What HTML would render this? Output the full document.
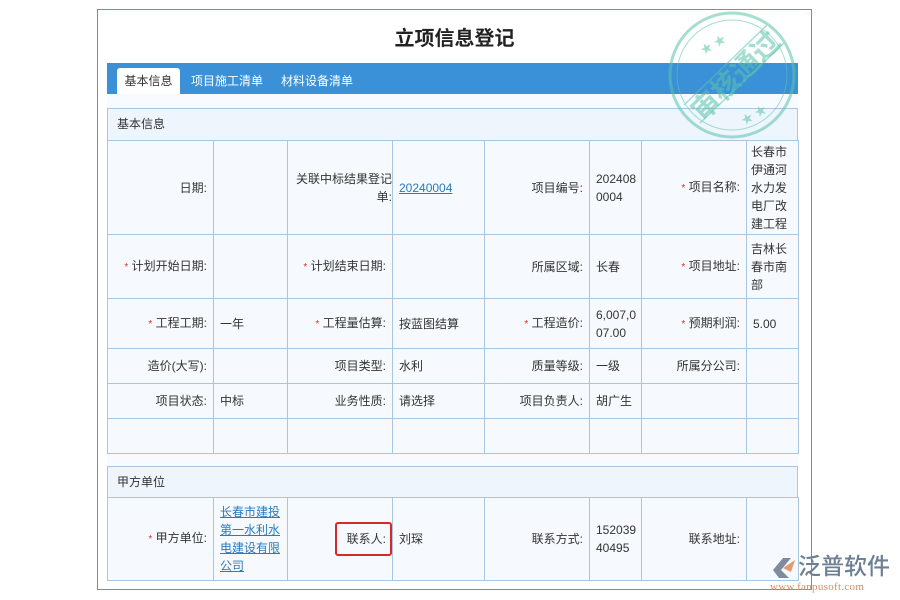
<!DOCTYPE html>
<html><head><meta charset="utf-8"><style>
*{margin:0;padding:0;box-sizing:border-box}
body{width:900px;height:600px;background:#fff;font-family:"Liberation Sans","Noto Sans CJK SC",sans-serif;font-size:12px;color:#333;position:relative;overflow:hidden}
.frame{position:absolute;left:97px;top:9px;width:715px;height:581px;border:1px solid #2fb0b8;background:#fff}
.title{position:absolute;left:97px;top:22px;width:715px;text-align:center;font-size:20px;font-weight:bold;color:#222}
.tabs{position:absolute;left:107px;top:63px;width:691px;height:31px;background:#3a91d8}
.tab{position:absolute;top:5px;height:26px;line-height:26px;color:#fff;font-size:12px}
.tab.on{background:#fff;color:#333;left:10px;width:63px;text-align:center;border-radius:3px 3px 0 0}
.bg{position:absolute;left:107px;top:94px;width:691px;height:486px;background:#f7fbff}
.sec{position:absolute;left:107px;width:691px;background:#eef5fc;border:1px solid #a9c6e0;padding-left:9px;color:#333}
table{position:absolute;left:107px;border-collapse:collapse;table-layout:fixed;background:#f6fafe}
td{border:1px solid #a9c6e0;font-size:12px;line-height:18px;padding:0 6px;vertical-align:middle}
td.l{text-align:right;padding-right:6px}
.r{color:#e03030;font-size:10px}
a{color:#2a7ac0;text-decoration:underline}
.box{border:2px solid #d42a2a;border-radius:3px;display:inline-block;padding:6px 4px 6px 10px;margin-right:-6px}
</style></head><body>
<div class="frame"></div>
<div class="title">立项信息登记</div>
<div class="tabs">
<div class="tab on">基本信息</div>
<div class="tab" style="left:84px">项目施工清单</div>
<div class="tab" style="left:174px">材料设备清单</div>
</div>
<div class="bg"></div>
<div class="sec" style="top:108px;height:33px;line-height:31px">基本信息</div>
<table style="top:140px;width:691px">
<colgroup><col style="width:106px"><col style="width:74px"><col style="width:105px"><col style="width:92px"><col style="width:105px"><col style="width:52px"><col style="width:105px"><col style="width:52px"></colgroup>
<tr style="height:94px"><td class="l">日期:</td><td></td><td class="l" style="padding-right:0">关联中标结果登记单:</td><td><a>20240004</a></td><td class="l">项目编号:</td><td>202408<br>0004</td><td class="l"><span class="r">*</span> 项目名称:</td><td style="padding:0 4px">长春市伊通河水力发电厂改建工程</td></tr>
<tr style="height:64px"><td class="l"><span class="r">*</span> 计划开始日期:</td><td></td><td class="l"><span class="r">*</span> 计划结束日期:</td><td></td><td class="l">所属区域:</td><td>长春</td><td class="l"><span class="r">*</span> 项目地址:</td><td style="padding:0 4px">吉林长春市南部</td></tr>
<tr style="height:50px"><td class="l"><span class="r">*</span> 工程工期:</td><td>一年</td><td class="l"><span class="r">*</span> 工程量估算:</td><td>按蓝图结算</td><td class="l"><span class="r">*</span> 工程造价:</td><td>6,007,0<br>07.00</td><td class="l"><span class="r">*</span> 预期利润:</td><td>5.00</td></tr>
<tr style="height:35px"><td class="l">造价(大写):</td><td></td><td class="l">项目类型:</td><td>水利</td><td class="l">质量等级:</td><td>一级</td><td class="l">所属分公司:</td><td></td></tr>
<tr style="height:35px"><td class="l">项目状态:</td><td>中标</td><td class="l">业务性质:</td><td>请选择</td><td class="l">项目负责人:</td><td>胡广生</td><td></td><td></td></tr>
<tr style="height:35px"><td></td><td></td><td></td><td></td><td></td><td></td><td></td><td></td></tr>
</table>
<div class="sec" style="top:466px;height:32px;line-height:30px">甲方单位</div>
<table style="top:497px;width:691px">
<colgroup><col style="width:106px"><col style="width:74px"><col style="width:105px"><col style="width:92px"><col style="width:105px"><col style="width:52px"><col style="width:105px"><col style="width:52px"></colgroup>
<tr style="height:83px"><td class="l"><span class="r">*</span> 甲方单位:</td><td><a>长春市建投第一水利水电建设有限公司</a></td><td class="l"><span class="box">联系人:</span></td><td>刘琛</td><td class="l">联系方式:</td><td>152039<br>40495</td><td class="l">联系地址:</td><td></td></tr>
</table>
<svg style="position:absolute;left:662px;top:10px" width="140" height="132" viewBox="0 0 140 132">
<g fill="none" stroke="#5cc4aa" opacity="0.55">
<circle cx="70" cy="65" r="62" stroke-width="3"/>
<circle cx="70" cy="65" r="55" stroke-width="1"/>
<line x1="22" y1="95" x2="105" y2="15" stroke-width="1.5"/>
<line x1="38" y1="113" x2="122" y2="33" stroke-width="1.5"/>
</g>
<text x="72" y="78" transform="rotate(-45 70 65)" text-anchor="middle" font-size="28" font-weight="bold" fill="#5cc4aa" opacity="0.55" font-family="Noto Sans CJK SC,sans-serif">审核通过</text>
<text x="40" y="40" transform="rotate(-30 50 40)" fill="#5cc4aa" font-size="12" opacity="0.55">★ ★</text>
<text x="78" y="110" transform="rotate(-30 90 105)" fill="#5cc4aa" font-size="12" opacity="0.55">★ ★</text>
</svg>
<svg style="position:absolute;left:771px;top:556px" width="28" height="24"><path d="M2 14 L12 2 L20 2 L10 14 L18 22 L8 22Z" fill="#7d8b9c"/><path d="M12 12 L24 4 L20 16Z" fill="#e59a6e"/></svg>
<div style="position:absolute;left:798px;top:551px;font-size:23px;color:#6d7f95;font-family:'Noto Sans CJK SC',sans-serif;line-height:27px;font-weight:500">泛普软件</div>
<div style="position:absolute;left:770px;top:581px;font-size:11px;color:#e08a6a;font-family:'Liberation Serif',serif;letter-spacing:0.3px">www.fanpusoft.com</div>
</body></html>
